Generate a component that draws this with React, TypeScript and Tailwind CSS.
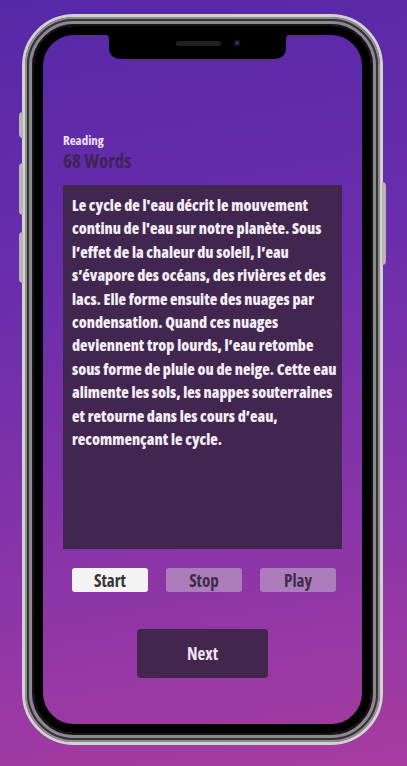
const PASSAGE = [
  "Le cycle de l'eau décrit le mouvement",
  "continu de l'eau sur notre planète. Sous",
  "l’effet de la chaleur du soleil, l’eau",
  "s’évapore des océans, des rivières et des",
  "lacs. Elle forme ensuite des nuages par",
  "condensation. Quand ces nuages",
  "deviennent trop lourds, l’eau retombe",
  "sous forme de pluie ou de neige. Cette eau",
  "alimente les sols, les nappes souterraines",
  "et retourne dans les cours d’eau,",
  "recommençant le cycle.",
];

export default function App() {
  return (
    <div className="w-[407px] h-[766px] overflow-hidden bg-[linear-gradient(170deg,#5628a7_0%,#6a2dab_35%,#8a35a8_70%,#a73ca0_100%)] pl-[22px] pt-[14px] font-['Open_Sans','Liberation_Sans',sans-serif] [font-stretch:75%] font-bold">
      <PhoneFrame>
        <ReadingScreen />
      </PhoneFrame>
    </div>
  );
}

function PhoneFrame({ children }: { children: React.ReactNode }) {
  return (
    <div className="relative w-[361px] h-[731px]">
      {/* side buttons */}
      <div className="absolute left-[-3px] top-[98px] w-[4px] h-[26px] rounded-l-sm bg-[#b5b5b5]" />
      <div className="absolute left-[-3px] top-[149px] w-[4px] h-[52px] rounded-l-sm bg-[#b5b5b5]" />
      <div className="absolute left-[-3px] top-[218px] w-[4px] h-[51px] rounded-l-sm bg-[#b5b5b5]" />
      <div className="absolute right-[-3px] top-[168px] w-[4px] h-[83px] rounded-r-sm bg-[#b5b5b5]" />

      <div className="h-full rounded-[52px] border-[3px] border-[#d2d2d2]">
        <div className="h-full rounded-[49px] border-[2px] border-[#8c8c8c]">
          <div className="h-full rounded-[47px] border-[2px] border-[#333333]">
            <div className="h-full rounded-[45px] border-[3px] border-[#8a8a8a]">
              <div className="h-full rounded-[42px] border-[2px] border-[#151515]">
                <div className="relative h-full rounded-[40px] border-[9px] border-black">
                  <Notch />
                  {children}
                </div>
              </div>
            </div>
          </div>
        </div>
      </div>
    </div>
  );
}

function Notch() {
  return (
    <svg
      className="absolute left-[60px] top-[-1px]"
      width="189"
      height="26"
      viewBox="0 0 189 26"
    >
      <path
        d="M0 0 H189 C184 0 183 2 183 7 V14 C183 21 178 25 171 25 H18 C11 25 6 21 6 14 V7 C6 2 5 0 0 0 Z"
        fill="#000"
      />
      <rect x="73" y="7" width="45" height="5" rx="2.5" fill="#1f1f22" />
      <circle cx="134" cy="9" r="3.2" fill="#141a2e" />
      <circle cx="134" cy="9" r="1.2" fill="#2f4a78" />
    </svg>
  );
}

function ReadingScreen() {
  return (
    <div className="flex flex-col pt-[97px]">
      <div className="ml-[20px] text-[13px] leading-[16px] text-[#efe3f7]">Reading</div>
      <div className="ml-[20px] mt-[2px] text-[19px] leading-[23px] text-[#3e2456]">68 Words</div>

      <div className="ml-[20px] mt-[12px] w-[279px] h-[364px] bg-[#41274f] p-[9px] [font-stretch:80%] font-extrabold text-[15.5px] leading-[23.4px] text-[#f5eef5]">
        {PASSAGE.map((line) => (
          <div key={line} className="whitespace-nowrap">
            {line}
          </div>
        ))}
      </div>

      <div className="ml-[29px] mt-[19px] flex gap-[18px]">
        <ControlButton label="Start" active />
        <ControlButton label="Stop" />
        <ControlButton label="Play" />
      </div>

      <button className="mx-auto mt-[37px] w-[131px] h-[49px] rounded-[4px] bg-[#42264e] text-[17px] text-[#efe2ef]">
        Next
      </button>
    </div>
  );
}

function ControlButton({ label, active }: { label: string; active?: boolean }) {
  return (
    <button
      className={
        active
          ? "w-[76px] h-[24px] rounded-[3px] bg-[#f5f4f5] text-[17px] leading-none text-[#333333]"
          : "w-[76px] h-[24px] rounded-[3px] bg-[#ad7cbd] text-[17px] leading-none text-[#3d2c48]"
      }
    >
      {label}
    </button>
  );
}
